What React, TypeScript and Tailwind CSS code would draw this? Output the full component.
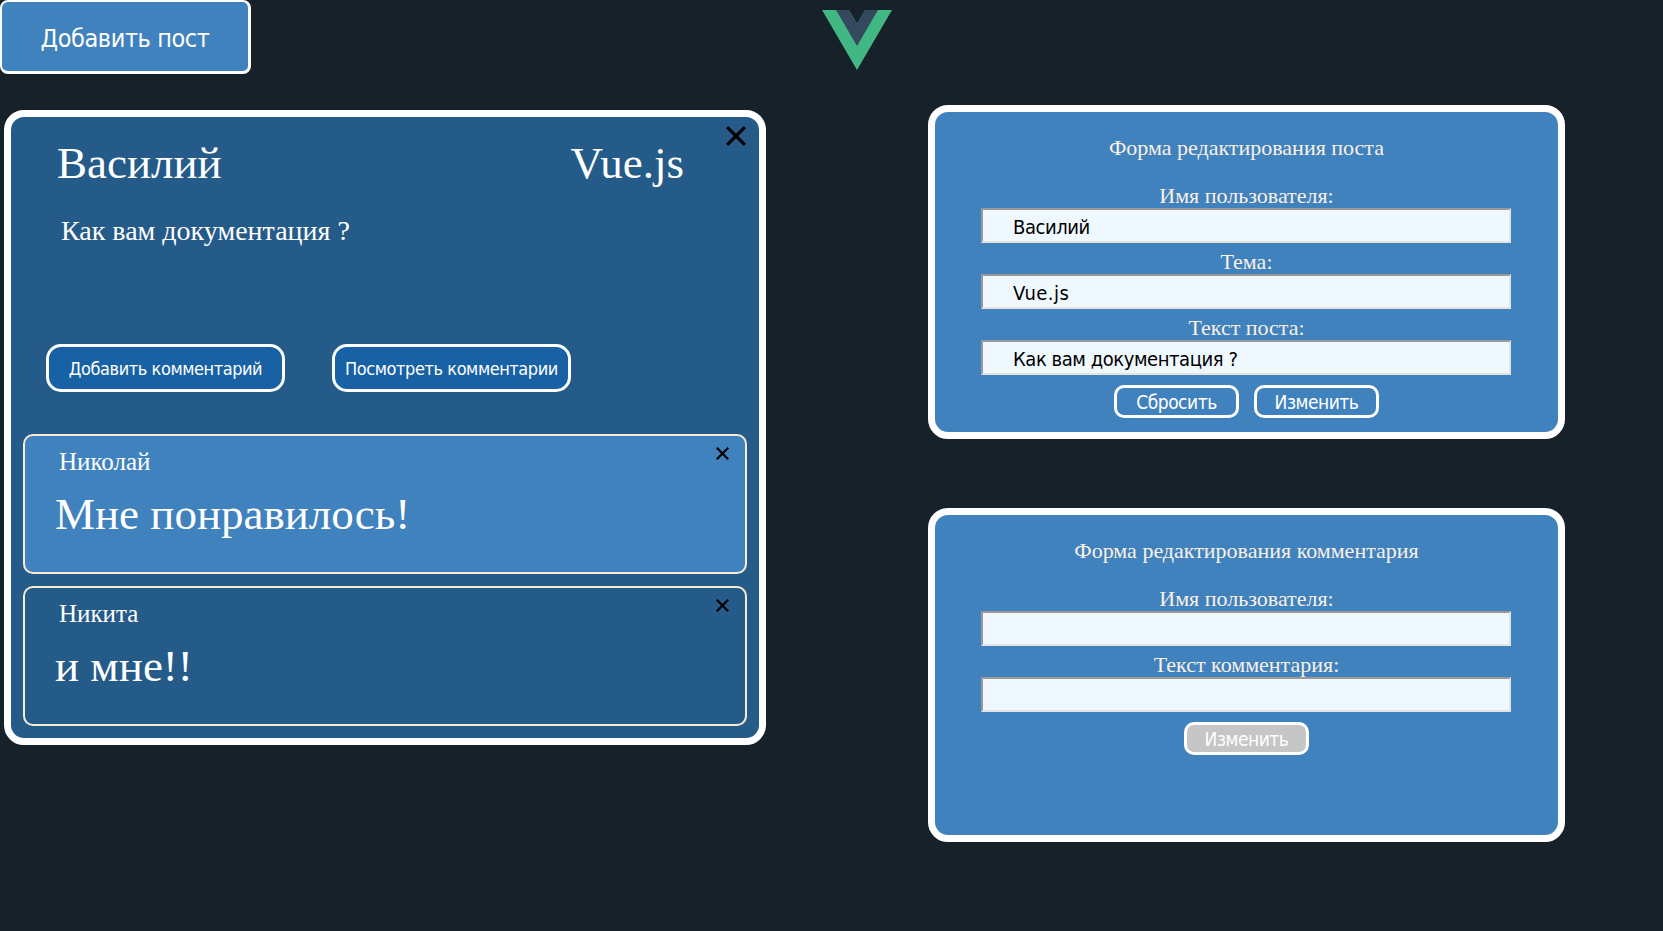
import { useState } from "react";
import clsx from "clsx";

const SANS = "font-['DejaVu_Sans_Condensed','DejaVu_Sans',sans-serif] [font-stretch:condensed]";

function VueLogo() {
  return (
    <svg width="70" height="60" viewBox="0 0 261.76 226.69" preserveAspectRatio="none" aria-hidden="true">
      <path d="M161.096.001l-30.225 52.351L100.647.001H-.005l130.877 226.688L261.749.001z" fill="#41b883" />
      <path d="M161.096.001l-30.225 52.351L100.647.001H52.346l78.526 136.01L209.398.001z" fill="#34495e" />
    </svg>
  );
}

function Cross({ size, stroke }: { size: number; stroke: number }) {
  const a = stroke * 0.36;
  const b = size - a;
  return (
    <svg width={size} height={size} viewBox={`0 0 ${size} ${size}`} className="block" aria-hidden="true">
      <path d={`M${a} ${a}L${b} ${b}M${b} ${a}L${a} ${b}`} stroke="#000" strokeWidth={stroke} />
    </svg>
  );
}

function CommentButton({ children }: { children: string }) {
  return (
    <button
      className={clsx(
        SANS,
        "flex h-12 w-[239px] items-center justify-center rounded-[15px] border-3 border-white bg-[#1861a4] pt-px text-[18px] leading-[21px] tracking-[-0.43px] whitespace-nowrap text-white",
      )}
    >
      {children}
    </button>
  );
}

function Comment({ author, text, active }: { author: string; text: string; active?: boolean }) {
  return (
    <article
      className={clsx(
        "relative h-[140px] rounded-[10px] border-2 border-[#faebd7] pt-3 text-white",
        active ? "bg-[#4082bd]" : "bg-[#255b89]",
      )}
    >
      <p className="pl-[34px] text-[25px] leading-[27px]">{author}</p>
      <p className="mt-3.5 pl-[30px] text-[45px] leading-[50px]">{text}</p>
      <button className="absolute top-[11px] right-4" aria-label="×">
        <Cross size={13} stroke={2.2} />
      </button>
    </article>
  );
}

type FieldProps = { label: string; initial?: string; tracking?: string };

function Field({ label, initial = "", tracking = "tracking-[-0.44px]" }: FieldProps) {
  const [value, setValue] = useState(initial);
  return (
    <label className="mb-1.5 block">
      <span className="block text-center text-[22px] leading-[25px]">{label}</span>
      <input
        value={value}
        onChange={(e) => setValue(e.target.value)}
        className={clsx(
          SANS,
          tracking,
          "ml-[46px] block h-[35px] w-[530px] border-2 border-t-[#999] border-r-[#e3e3e3] border-b-[#e3e3e3] border-l-[#999] bg-[#f0f8ff] pt-0.5 pl-[30px] text-[20px] text-black outline-none",
        )}
      />
    </label>
  );
}

function FormButton({ children, disabled }: { children: string; disabled?: boolean }) {
  return (
    <button
      disabled={disabled}
      className={clsx(
        SANS,
        "flex h-[33px] w-[125px] items-center justify-center rounded-[10px] border-3 border-white pt-px text-[19px] leading-[22px] tracking-[-0.48px] text-white",
        disabled ? "bg-[#c6c6c6]" : "bg-[#4082bd]",
      )}
    >
      {children}
    </button>
  );
}

function FormPanel({ title, fields, children }: { title: string; fields: FieldProps[]; children: React.ReactNode }) {
  return (
    <section className="h-[334px] w-[637px] rounded-[20px] border-[7px] border-white bg-[#4082bd] pt-[23px] text-[#faf0e6]">
      <h2 className="mb-[23px] text-center text-[22px] leading-[25px]">{title}</h2>
      {fields.map((field) => (
        <Field key={field.label} {...field} />
      ))}
      <div className="flex justify-center gap-[15px] pt-1">{children}</div>
    </section>
  );
}

export default function App() {
  return (
    <div className="grid h-[931px] grid-cols-[822px_1fr] overflow-hidden bg-[#17212a] font-['Liberation_Serif',serif]">
      <div>
        <button
          className={clsx(
            SANS,
            "flex h-[74px] w-[251px] items-center justify-center rounded-lg border-2 border-r-3 border-b-3 border-white bg-[#4082bd] pt-1 text-[25px] leading-[29px] tracking-[-0.4px] text-white",
          )}
        >
          Добавить пост
        </button>

        <section className="relative mt-9 ml-1 w-[762px] rounded-[20px] border-[7px] border-white bg-[#255b89] pt-[21px] pb-3 text-white">
          <header className="flex justify-between pr-[75px] pl-[46px] text-[45px] leading-[50px]">
            <h1>Василий</h1>
            <span>Vue.js</span>
          </header>
          <p className="mt-[27px] pl-[50px] text-[28px] leading-[31px]">Как вам документация ?</p>
          <div className="mt-[98px] flex gap-[47px] pl-[35px]">
            <CommentButton>Добавить комментарий</CommentButton>
            <CommentButton>Посмотреть комментарии</CommentButton>
          </div>
          <div className="mx-3 mt-[42px] flex flex-col gap-3">
            <Comment author="Николай" text="Мне понравилось!" active />
            <Comment author="Никита" text="и мне!!" />
          </div>
          <button className="absolute top-[9px] right-[13px]" aria-label="×">
            <Cross size={20} stroke={3.2} />
          </button>
        </section>
      </div>

      <div className="pt-2.5">
        <VueLogo />
        <div className="mt-[35px] ml-[106px] flex flex-col gap-[69px]">
          <FormPanel
            title="Форма редактирования поста"
            fields={[
              { label: "Имя пользователя:", initial: "Василий" },
              { label: "Тема:", initial: "Vue.js", tracking: "tracking-[0.45px]" },
              { label: "Текст поста:", initial: "Как вам документация ?" },
            ]}
          >
            <FormButton>Сбросить</FormButton>
            <FormButton>Изменить</FormButton>
          </FormPanel>
          <FormPanel
            title="Форма редактирования комментария"
            fields={[{ label: "Имя пользователя:" }, { label: "Текст комментария:" }]}
          >
            <FormButton disabled>Изменить</FormButton>
          </FormPanel>
        </div>
      </div>
    </div>
  );
}
